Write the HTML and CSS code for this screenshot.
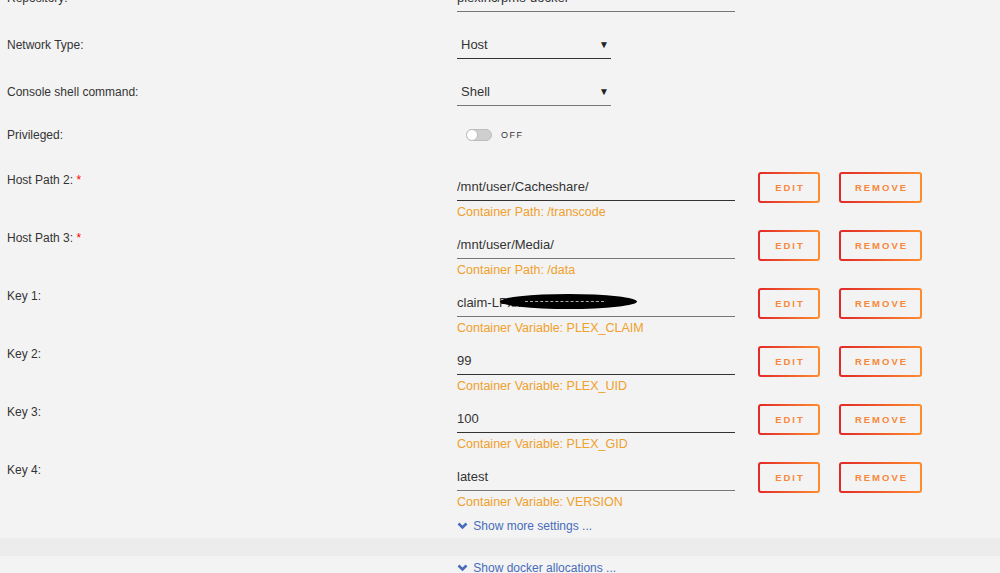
FILE: index.html
```html
<!DOCTYPE html>
<html lang="en">
<head>
    <meta charset="UTF-8">
    <title>Edit Container</title>
    <link rel="stylesheet" href="styles.css">
</head>
<body>

    <div class="form">
        <div class="row row-simple">
            <div class="label">Repository:</div>
            <input class="field field-light" value="plexinc/pms-docker">
        </div>

        <div class="row row-simple">
            <div class="label">Network Type:</div>
            <div class="select"><span>Host</span><span class="arrow">&#9660;</span></div>
        </div>

        <div class="row row-simple">
            <div class="label">Console shell command:</div>
            <div class="select select-light"><span>Shell</span><span class="arrow">&#9660;</span></div>
        </div>

        <div class="row row-switch">
            <div class="label">Privileged:</div>
            <div class="switch-wrap">
                <span class="switch"><span class="knob"></span></span>
                <span class="switch-text">OFF</span>
            </div>
        </div>

        <div class="row row-entry">
            <div class="label">Host Path 2: <span class="req">*</span></div>
            <div class="entry">
                <input class="field" value="/mnt/user/Cacheshare/">
                <div class="note">Container Path: /transcode</div>
            </div>
            <button class="btn btn-edit">EDIT</button>
            <button class="btn btn-remove">REMOVE</button>
        </div>

        <div class="row row-entry">
            <div class="label">Host Path 3: <span class="req">*</span></div>
            <div class="entry">
                <input class="field field-light" value="/mnt/user/Media/">
                <div class="note">Container Path: /data</div>
            </div>
            <button class="btn btn-edit">EDIT</button>
            <button class="btn btn-remove">REMOVE</button>
        </div>

        <div class="row row-entry">
            <div class="label">Key 1:</div>
            <div class="entry">
                <div class="redact-wrap">
                    <input class="field field-light" value="claim-LPxxxxxx">
                    <span class="redact"><span class="scribble"></span></span>
                </div>
                <div class="note">Container Variable: PLEX_CLAIM</div>
            </div>
            <button class="btn btn-edit">EDIT</button>
            <button class="btn btn-remove">REMOVE</button>
        </div>

        <div class="row row-entry">
            <div class="label">Key 2:</div>
            <div class="entry">
                <input class="field" value="99">
                <div class="note">Container Variable: PLEX_UID</div>
            </div>
            <button class="btn btn-edit">EDIT</button>
            <button class="btn btn-remove">REMOVE</button>
        </div>

        <div class="row row-entry">
            <div class="label">Key 3:</div>
            <div class="entry">
                <input class="field" value="100">
                <div class="note">Container Variable: PLEX_GID</div>
            </div>
            <button class="btn btn-edit">EDIT</button>
            <button class="btn btn-remove">REMOVE</button>
        </div>

        <div class="row row-entry">
            <div class="label">Key 4:</div>
            <div class="entry">
                <input class="field field-light" value="latest">
                <div class="note">Container Variable: VERSION</div>
            </div>
            <button class="btn btn-edit">EDIT</button>
            <button class="btn btn-remove">REMOVE</button>
        </div>

        <div class="more">
            <a href="#" class="toggle-link">
                <svg width="11" height="8" viewBox="0 0 11 8"><polyline points="1.5,1.5 5.5,5.5 9.5,1.5" fill="none" stroke="#486cbb" stroke-width="2.6"/></svg>
                Show more settings ...
            </a>
        </div>
    </div>

    <div class="band"></div>

    <div class="more more-bottom">
        <a href="#" class="toggle-link">
            <svg width="11" height="8" viewBox="0 0 11 8"><polyline points="1.5,1.5 5.5,5.5 9.5,1.5" fill="none" stroke="#486cbb" stroke-width="2.6"/></svg>
            Show docker allocations ...
        </a>
    </div>

</body>
</html>
```

FILE: styles.css
```css
body {
    margin: 0;
    background-color: #f3f3f3;
    font-family: "Liberation Sans", Arial, sans-serif;
    font-size: 12px;
    color: #333;
    overflow: hidden;
}

.form {
    margin-top: -17px;
}

.row {
    display: flex;
}

.label {
    width: 457px;
    padding-left: 7px;
    box-sizing: border-box;
    line-height: 16px;
    flex-shrink: 0;
}

.req {
    color: #f00;
}

/* simple one-line rows */
.row-simple {
    align-items: center;
    height: 29px;
    margin-bottom: 18px;
}

.row-switch {
    align-items: center;
    height: 22px;
    margin-bottom: 26px;
}

.field {
    width: 278px;
    height: 29px;
    box-sizing: border-box;
    padding: 0;
    border: none;
    border-bottom: 1px solid #333;
    background: transparent;
    font-family: "Liberation Sans", Arial, sans-serif;
    font-size: 13px;
    color: #333;
    outline: none;
}

.field-light {
    border-bottom-color: #777;
}

.select {
    width: 154px;
    height: 29px;
    box-sizing: border-box;
    padding: 0 2px 0 4px;
    border-bottom: 1px solid #333;
    display: flex;
    align-items: center;
    justify-content: space-between;
    font-size: 13px;
}

.select-light {
    border-bottom-color: #777;
}

.arrow {
    font-size: 10px;
    color: #222;
}

.switch-wrap {
    display: flex;
    align-items: center;
    padding-left: 9px;
}

.switch {
    width: 26px;
    height: 12px;
    border-radius: 7px;
    border: 1px solid #bdbdbd;
    background-color: #cfcfcf;
    position: relative;
    box-sizing: border-box;
}

.knob {
    position: absolute;
    left: -1px;
    top: -1px;
    width: 12px;
    height: 12px;
    border-radius: 50%;
    background: #fff;
    border: 1px solid #bdbdbd;
    box-sizing: border-box;
}

.switch-text {
    margin-left: 9px;
    font-size: 9px;
    letter-spacing: 1.5px;
    color: #333;
}

/* entry rows: path / variable with buttons */
.row-entry {
    margin-bottom: 10px;
    align-items: flex-start;
}

.entry {
    width: 278px;
}

.note {
    margin-top: 3px;
    line-height: 16px;
    font-size: 12.5px;
    color: #f0a02c;
}

.btn {
    height: 31px;
    box-sizing: border-box;
    border: 2px solid transparent;
    border-radius: 3px;
    background: linear-gradient(#f3f3f3, #f3f3f3) padding-box,
                linear-gradient(90deg, #e22828, #ff8d30) border-box;
    font-family: "Liberation Sans", Arial, sans-serif;
    font-size: 9.5px;
    font-weight: bold;
    letter-spacing: 2px;
    color: #f7883a;
    padding: 0 0 0 2px;
}

.btn-edit {
    width: 62px;
    margin-left: 23px;
}

.btn-remove {
    width: 83px;
    margin-left: 19px;
}

/* redacted claim token */
.redact-wrap {
    position: relative;
}

.redact {
    position: absolute;
    left: 43px;
    top: 6px;
    width: 137px;
    height: 15px;
    border-radius: 50%;
    background: #000;
}

.scribble {
    position: absolute;
    left: 25px;
    right: 33px;
    top: 7px;
    height: 1px;
    border-top: 1px dashed #aaa;
}

.more {
    padding-left: 457px;
    line-height: 14px;
    margin-top: -1px;
    margin-bottom: 5px;
}

.more-bottom {
    margin-top: 4px;
    line-height: 16px;
}

.toggle-link {
    color: #486cbb;
    text-decoration: none;
    font-size: 12px;
}

.toggle-link svg {
    vertical-align: 0;
    margin-right: 2px;
}

.band {
    height: 18px;
    background-color: #ececec;
}
```
